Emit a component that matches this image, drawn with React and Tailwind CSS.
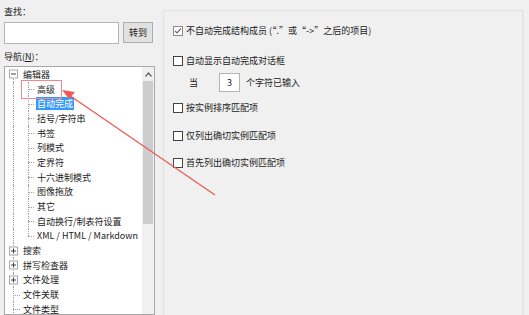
import React from "react";

const font = { fontFamily: '"Noto Sans CJK SC", "Noto Sans", sans-serif' };

function Gut({ v = "none", h = false, box = null, w = 17, lx = 8 }) {
  // v: "none" | "full" | "top" | "bottom"
  return (
    <div className="relative h-full shrink-0" style={{ width: w }}>
      {v === "full" && (
        <div className="absolute top-0 bottom-0 border-l border-dotted border-[#a0a0a0]" style={{ left: lx }} />
      )}
      {v === "top" && (
        <div className="absolute top-0 h-1/2 border-l border-dotted border-[#a0a0a0]" style={{ left: lx }} />
      )}
      {v === "bottom" && (
        <div className="absolute top-1/2 bottom-0 border-l border-dotted border-[#a0a0a0]" style={{ left: lx }} />
      )}
      {h && (
        <div className="absolute top-1/2 border-t border-dotted border-[#a0a0a0]" style={{ left: lx, width: w - lx - 2 }} />
      )}
      {box && (
        <div
          className="absolute top-1/2 -translate-y-1/2 w-[9px] h-[9px] border border-[#a8a8a8] bg-white flex items-center justify-center"
          style={{ left: lx - 4 }}
        >
          <div className="absolute w-[5px] border-t border-[#404040]" />
          {box === "plus" && <div className="absolute h-[5px] border-l border-[#404040]" />}
        </div>
      )}
    </div>
  );
}

function Row({ children }) {
  return <div className="flex items-center h-[14.7px] whitespace-nowrap">{children}</div>;
}

function Label({ children, sel = false }) {
  return (
    <span
      className={
        "text-[9px] leading-[13px] px-[1px] " + (sel ? "bg-[#3399ff] text-white" : "text-[#1a1a1a]")
      }
    >
      {children}
    </span>
  );
}

function CheckBox({ checked = false }) {
  return (
    <div
      className={
        "w-[10px] h-[10px] bg-white border shrink-0 flex items-center justify-center " +
        (checked ? "border-[#8a8a8a]" : "border-[#444]")
      }
    >
      {checked && (
        <svg width="8" height="8" viewBox="0 0 8 8">
          <path d="M1 4 L3 6 L7 1.5" fill="none" stroke="#6a6a6a" strokeWidth="1.2" />
        </svg>
      )}
    </div>
  );
}

export default function App() {
  const children = [
    "高级",
    "自动完成",
    "括号/字符串",
    "书签",
    "列模式",
    "定界符",
    "十六进制模式",
    "图像拖放",
    "其它",
    "自动换行/制表符设置",
    "XML / HTML / Markdown",
  ];
  return (
    <div className="relative w-[529px] h-[315px] overflow-hidden bg-[#f0f0f0] flex" style={font}>
      {/* Left column */}
      <div className="w-[159px] pl-[4px] pt-[5px] flex flex-col shrink-0">
        <div className="h-[14px] text-[9px] leading-[14px] text-[#1a1a1a]">查找：</div>
        <div className="mt-[3px] flex items-start gap-[4px]">
          <div className="w-[115px] h-[22px] bg-white border border-[#b4b4b4]" />
          <div className="w-[30px] h-[21px] bg-[#e1e1e1] border border-[#adadad] flex items-center justify-center text-[9px] text-[#1a1a1a]">
            转到
          </div>
        </div>
        <div className="mt-[6px] h-[14px] text-[9px] leading-[14px] text-[#1a1a1a]">
          导航(<span className="underline">N</span>)：
        </div>
        <div className="mt-[2px] w-[151px] h-[260px] bg-white border border-[#a8a8a8] flex overflow-hidden">
          <div className="flex-1 min-w-0 overflow-hidden">
            <Row>
              <Gut v="bottom" box="minus" />
              <Label>编辑器</Label>
            </Row>
            {children.map((c, i) => (
              <Row key={c}>
                <Gut v="full" />
                <Gut v={i === children.length - 1 ? "top" : "full"} h w={14} lx={6} />
                <Label sel={c === "自动完成"}>{c}</Label>
              </Row>
            ))}
            <Row>
              <Gut v="full" box="plus" />
              <Label>搜索</Label>
            </Row>
            <Row>
              <Gut v="full" box="plus" />
              <Label>拼写检查器</Label>
            </Row>
            <Row>
              <Gut v="full" box="plus" />
              <Label>文件处理</Label>
            </Row>
            <Row>
              <Gut v="full" h />
              <Label>文件关联</Label>
            </Row>
            <Row>
              <Gut v="full" h />
              <Label>文件类型</Label>
            </Row>
          </div>
          <div className="w-[12px] shrink-0 bg-[#f0f0f0] flex flex-col items-center">
            <div className="h-[14px] flex items-center justify-center">
              <svg width="7" height="5" viewBox="0 0 7 5">
                <path d="M0.5 4.5 L3.5 1 L6.5 4.5" fill="none" stroke="#606060" strokeWidth="1.2" />
              </svg>
            </div>
            <div className="w-[10px] h-[143px] bg-[#cdcdcd]" />
          </div>
        </div>
      </div>

      {/* Right panel */}
      <div className="ml-[4px] mt-[10px] w-[360px] h-[320px] border border-[#e2e2e2] shadow-[1px_0_0_#e8e8e8] pl-[9px] pt-[14px] flex flex-col text-[9px] text-[#1a1a1a]">
        <div className="h-[12px] flex items-center gap-[3px]">
          <CheckBox checked />
          <span className="leading-[12px]">不自动完成结构成员 (“.”或“-&gt;”之后的项目)</span>
        </div>
        <div className="mt-[18px] h-[12px] flex items-center gap-[3px]">
          <CheckBox />
          <span className="leading-[12px]">自动显示自动完成对话框</span>
        </div>
        <div className="mt-[6px] h-[19px] flex items-center pl-[16px]">
          <span>当</span>
          <div className="ml-[21px] w-[21px] h-[19px] bg-white border border-[#b4b4b4] flex items-center justify-center">
            3
          </div>
          <span className="ml-[6px]">个字符已输入</span>
        </div>
        <div className="mt-[10px] h-[12px] flex items-center gap-[3px]">
          <CheckBox />
          <span className="leading-[12px]">按实例排序匹配项</span>
        </div>
        <div className="mt-[16px] h-[12px] flex items-center gap-[3px]">
          <CheckBox />
          <span className="leading-[12px]">仅列出确切实例匹配项</span>
        </div>
        <div className="mt-[15px] h-[12px] flex items-center gap-[3px]">
          <CheckBox />
          <span className="leading-[12px]">首先列出确切实例匹配项</span>
        </div>
      </div>

      {/* Red highlight box */}
      <div className="absolute left-[21px] top-[80px] w-[41px] h-[19px] border border-[#f08a8a]" />
      {/* Red arrow */}
      <svg className="absolute left-0 top-0 pointer-events-none" width="529" height="315">
        <line x1="66" y1="93" x2="215" y2="195" stroke="#ef5a55" strokeWidth="1.3" />
        <path d="M62 90 L75 92 L69 99 Z" fill="#ef5a55" />
      </svg>
    </div>
  );
}
